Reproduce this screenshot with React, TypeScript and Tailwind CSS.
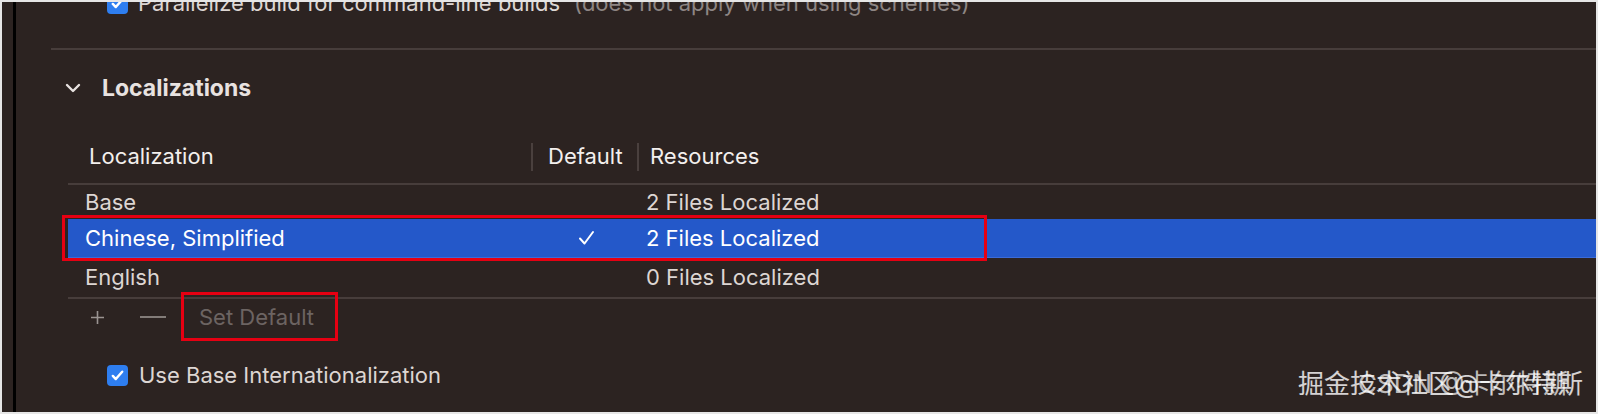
const font = { fontFamily: 'Inter, "Noto Sans CJK SC", sans-serif' };

function Checkbox() {
  return (
    <div className="w-[21px] h-[21px] rounded-[4px] bg-[#2e7ef0] flex items-center justify-center shrink-0">
      <svg width="15" height="15" viewBox="0 0 16 16" fill="none">
        <path d="M3 8.5l3.2 3.3L13 4" stroke="#fff" strokeWidth="2.6" strokeLinecap="round" strokeLinejoin="round" />
      </svg>
    </div>
  );
}

function Row({ name, files, selected, isDefault, h }: { name: string; files: string; selected?: boolean; isDefault?: boolean; h: string }) {
  return (
    <div
      className={`grid grid-cols-[465px_106px_1fr] items-center ${h} text-[22px] ${
        selected ? 'bg-[#2458c9] text-white border-b border-[#3b6bd8]' : 'text-[#ddd6d3]'
      }`}
    >
      <div className="pl-[17px]">{name}</div>
      <div className="pl-[45px]">
        {isDefault && (
          <svg width="17" height="16" viewBox="0 0 17 16" fill="none">
            <path d="M2 8.5l4.5 5L15 2" stroke="#fff" strokeWidth="2" strokeLinecap="round" strokeLinejoin="round" />
          </svg>
        )}
      </div>
      <div className="pl-[7px]">{files}</div>
    </div>
  );
}

export default function App() {
  return (
    <div className="w-[1598px] h-[414px] bg-[#e6e6e6] pt-[2px] pl-[2px] pr-[2px] pb-[2px]" style={font}>
      <div className="relative h-full bg-[#2c2321] flex overflow-hidden">
        <div className="w-[11px] shrink-0" />
        <div className="w-[3px] bg-black shrink-0" />
        <div className="flex-1 flex flex-col">
          {/* top row, cut off at the top */}
          <div className="h-[30px] overflow-hidden">
            <div className="flex items-center gap-[10px] pl-[91px] -mt-[9px] h-[21px] text-[22px]">
              <Checkbox />
              <span className="text-[#ddd6d3]">Parallelize build for command-line builds</span>
              <span className="text-[#8e8684] ml-[4px]">(does not apply when using schemes)</span>
            </div>
          </div>
          <div className="h-[16px]" />
          <div className="ml-[35px] h-[2px] bg-[#473d3b]" />

          <div className="flex items-center h-[80px] pb-[4px] pl-[49px] gap-[21px]">
            <svg width="16" height="10" viewBox="0 0 16 10" fill="none">
              <path d="M2 2l6 6 6-6" stroke="#e8e2e0" strokeWidth="2.4" strokeLinecap="round" strokeLinejoin="round" />
            </svg>
            <span className="text-[23px] font-bold text-[#e8e2e0]">Localizations</span>
          </div>

          <div className="ml-[52px] flex flex-col">
            <div className="grid grid-cols-[465px_106px_1fr] items-center h-[53px] text-[22px] text-[#f3efed]">
              <div className="pl-[21px] h-[28px] flex items-center border-r-2 border-[#4a403e]">Localization</div>
              <div className="pl-[15px] h-[28px] flex items-center border-r-2 border-[#4a403e]">Default</div>
              <div className="pl-[11px]">Resources</div>
            </div>
            <div className="h-[2px] bg-[#473d3b]" />
            <Row name="Base" files="2 Files Localized" h="h-[34px]" />
            <Row name="Chinese, Simplified" files="2 Files Localized" selected isDefault h="h-[39px]" />
            <Row name="English" files="0 Files Localized" h="h-[39px]" />
            <div className="h-[2px] bg-[#473d3b]" />
            <div className="flex items-center h-[36px] text-[22px]">
              <svg className="ml-[22px]" width="15" height="15" viewBox="0 0 15 15" fill="none">
                <path d="M7.5 1v13M1 7.5h13" stroke="#9a9391" strokeWidth="1.6" />
              </svg>
              <svg className="ml-[35px]" width="26" height="4" viewBox="0 0 26 4" fill="none">
                <path d="M0 2h26" stroke="#9a9391" strokeWidth="1.6" />
              </svg>
              <span className="ml-[33px] text-[#6c6462]">Set Default</span>
            </div>
          </div>

          <div className="flex items-center gap-[11px] pl-[91px] mt-[24px] text-[22px] text-[#ddd6d3]">
            <Checkbox />
            <span>Use Base Internationalization</span>
          </div>
        </div>

        {/* red annotation boxes */}
        <div className="absolute left-[60px] top-[213px] w-[925px] h-[46px] border-[3px] border-[#e60012]" />
        <div className="absolute left-[179px] top-[290px] w-[157px] h-[49px] border-[3px] border-[#e60012]" />

        {/* watermarks */}
        <div className="absolute left-[1296px] top-[369px] text-[26px] text-white/80 whitespace-nowrap leading-none">
          掘金技术社区@卡尔特斯
        </div>
        <div className="absolute left-[1356px] top-[369px] text-[26px] text-white/70 whitespace-nowrap leading-none">
          CSDN @卡尔特斯
        </div>
      </div>
    </div>
  );
}
